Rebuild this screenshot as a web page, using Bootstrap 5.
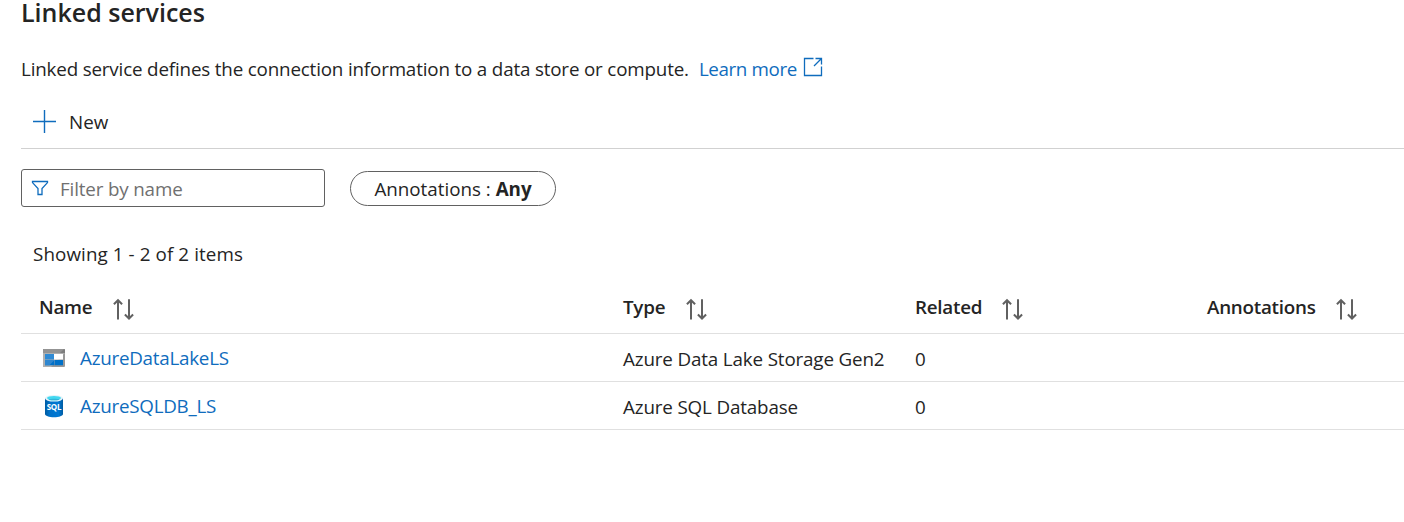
<!DOCTYPE html>
<html lang="en">
<head>
<meta charset="utf-8">
<meta name="viewport" content="width=device-width, initial-scale=1">
<title>Linked services</title>
<link href="https://cdn.jsdelivr.net/npm/bootstrap@5.3.0/dist/css/bootstrap.min.css" rel="stylesheet">
<style>
  body { font-family: "Open Sans", "Noto Sans", sans-serif; font-size: 18.8px; line-height: 26px; color: #242424; background: #fff; overflow: hidden; }
  .page { padding-left: 21px; }
  .page-title { font-size: 25px; line-height: 24px; font-weight: 600; letter-spacing: 0; margin-bottom: 32px; }
  .azure-link { color: #0f6cbd; text-decoration: none; }
  .intro { letter-spacing: -.165px; height: 26px; }
  .intro .azure-link { letter-spacing: -.38px; margin-left: 10px; }
  .external-icon { margin: 1px 0 0 6px; }
  .toolbar { height: 67px; border-bottom: 1px solid #d1d1d1; padding-left: 12px; }
  .new-button { gap: 13px; margin-top: 27px; height: 26px; color: inherit; font-size: inherit; line-height: inherit; }
  .new-button svg { margin-top: -1px; }
  .filters { padding-top: 20px; gap: 25px; }
  .filter-box { width: 304px; height: 38px; border: 1px solid #616161; border-radius: 3px; padding-left: 9px; gap: 11px; }
  .filter-box input { font-size: inherit; letter-spacing: -.15px; color: #242424; outline: 0; min-width: 0; padding: 2px 0 0; line-height: 26px; }
  .filter-box input::placeholder { color: #707070; opacity: 1; }
  .pill { height: 35px; width: 206px; border: 1px solid #616161; border-radius: 18px; background: #fff; font-size: inherit; color: inherit; line-height: 26px; padding: 2px 0 0; }
  .result-count { margin: 34px 0 0 12px; letter-spacing: .1px; }
  .services { table-layout: fixed; width: 1383px; margin-top: 14px; --bs-table-color: #242424; color: #242424; border-color: #e0e0e0; }
  .services th, .services td { padding: 2px 0 0 18px; height: 48px; vertical-align: middle; letter-spacing: -.14px; }
  .services th { height: 52px; font-weight: 600; padding-top: 1px; letter-spacing: -.24px; }
  .services td { padding-top: 3px; }
  .services th > div, .resource-name { height: 26px; }
  .sort-icon { margin-top: 4px; }
  .gap-name { gap: 20px; } .gap-type { gap: 20px; } .gap-related { gap: 19px; } .gap-annotations { gap: 19px; }
  .services td.name-cell { padding: 1px 0 0 22px; }
  .resource-name { gap: 15px; letter-spacing: -.24px; }
</style>
</head>
<body>
<svg class="d-none" aria-hidden="true">
  <symbol id="sort" viewBox="0 0 22 22">
    <path d="M6 21.500V2.500M1.900 6.200 6 2.200l4.100 4M17 1.200v19M12.900 16.500l4.100 4 4.100-4" fill="none" stroke="#616161" stroke-width="2"/>
  </symbol>
</svg>
<main class="page">
  <h1 class="page-title">Linked services</h1>
  <p class="intro mb-0 d-flex">
    <span>Linked service defines the connection information to a data store or compute.</span>
    <a class="azure-link d-flex" href="#">Learn more
      <svg class="external-icon" width="20" height="20" viewBox="0 0 20 20" fill="none" stroke="#0f6cbd" stroke-width="1.3"><path d="M10.500 1.500H1.500V18.500H18.500V9.500M11 9 18.500 1.500M12.500 1.500H18.500V7.500"/></svg>
    </a>
  </p>
  <div class="toolbar d-flex align-items-start">
    <button class="new-button btn border-0 p-0 d-flex align-items-center" type="button">
      <svg width="23" height="23" viewBox="0 0 23 23" fill="none" stroke="#0f6cbd" stroke-width="1.4"><path d="M0 11.500H23M11.500 0V23"/></svg>
      New
    </button>
  </div>
  <div class="filters d-flex align-items-center">
    <label class="filter-box d-flex align-items-center">
      <svg width="18" height="16" viewBox="0 0 18 16" fill="none" stroke="#0f6cbd" stroke-width="1.3"><path d="M1.500 1.500H16.500V2.600L11 8.600V14.500H7V8.600L1.500 2.600Z"/></svg>
      <input class="border-0 flex-grow-1 bg-transparent" type="text" placeholder="Filter by name" aria-label="Filter by name">
    </label>
    <button class="pill" type="button">Annotations : <b>Any</b></button>
  </div>
  <p class="result-count mb-0">Showing 1 - 2 of 2 items</p>
  <table class="table services mb-0">
    <colgroup><col style="width:584px"><col style="width:292px"><col style="width:292px"><col></colgroup>
    <thead>
      <tr>
        <th><div class="d-flex gap-name">Name<svg class="sort-icon" width="22" height="22"><use href="#sort"/></svg></div></th>
        <th><div class="d-flex gap-type">Type<svg class="sort-icon" width="22" height="22"><use href="#sort"/></svg></div></th>
        <th><div class="d-flex gap-related">Related<svg class="sort-icon" width="22" height="22"><use href="#sort"/></svg></div></th>
        <th><div class="d-flex gap-annotations">Annotations<svg class="sort-icon" width="22" height="22"><use href="#sort"/></svg></div></th>
      </tr>
    </thead>
    <tbody>
      <tr>
        <td class="name-cell">
          <div class="resource-name d-flex align-items-center">
            <svg width="22" height="18" viewBox="0 0 22 18">
              <rect width="22" height="18" rx="1" fill="#989898"/>
              <path d="M0 4h22L8 18H1a1 1 0 0 1-1-1Z" fill="#b0b0b0"/>
              <path d="M0 4V1a1 1 0 0 1 1-1h20a1 1 0 0 1 1 1v3Z" fill="#7d7d7d"/>
              <path d="M0 4V1a1 1 0 0 1 1-1h20l-4 4Z" fill="#939393"/>
              <path d="M2 5h9v5.500H2Z" fill="#2f8ad4"/><path d="M11 5h9v5.500h-9Z" fill="#fff"/>
              <path d="M2 11h9v5.300H2ZM11.400 11H20v5.300h-8.600Z" fill="#0070c8"/>
              <path d="M2 11h9v.5L6.500 16.300H2Z" fill="#2f86cf"/>
            </svg>
            <a class="azure-link" href="#">AzureDataLakeLS</a>
          </div>
        </td>
        <td>Azure Data Lake Storage Gen2</td><td>0</td><td></td>
      </tr>
      <tr>
        <td class="name-cell">
          <div class="resource-name d-flex align-items-center">
            <svg width="22" height="24" viewBox="0 0 22 24">
              <defs><linearGradient id="body"><stop stop-color="#005ba1"/><stop offset=".25" stop-color="#0071c8"/><stop offset=".75" stop-color="#0078d4"/><stop offset="1" stop-color="#005ba1"/></linearGradient></defs>
              <path d="M2 4.300V20c0 1.700 4 3.200 9 3.200s9-1.500 9-3.200V4.300Z" fill="url(#body)"/>
              <ellipse cx="11" cy="4.300" rx="9" ry="3.300" fill="#e4f3fa"/>
              <ellipse cx="11" cy="4.100" rx="7" ry="2.200" fill="#42d8f0"/>
              <path d="M5.500 5.400C8 4.600 14 4.600 16.500 5.400 14 6.600 8 6.600 5.500 5.400Z" fill="#32b5d8"/>
              <text x="11" y="16.400" text-anchor="middle" font-size="8" font-weight="700" fill="#fff" letter-spacing="-.2">SQL</text>
            </svg>
            <a class="azure-link" href="#">AzureSQLDB_LS</a>
          </div>
        </td>
        <td>Azure SQL Database</td><td>0</td><td></td>
      </tr>
    </tbody>
  </table>
</main>
<script src="https://cdn.jsdelivr.net/npm/bootstrap@5.3.0/dist/js/bootstrap.bundle.min.js"></script>
</body>
</html>
